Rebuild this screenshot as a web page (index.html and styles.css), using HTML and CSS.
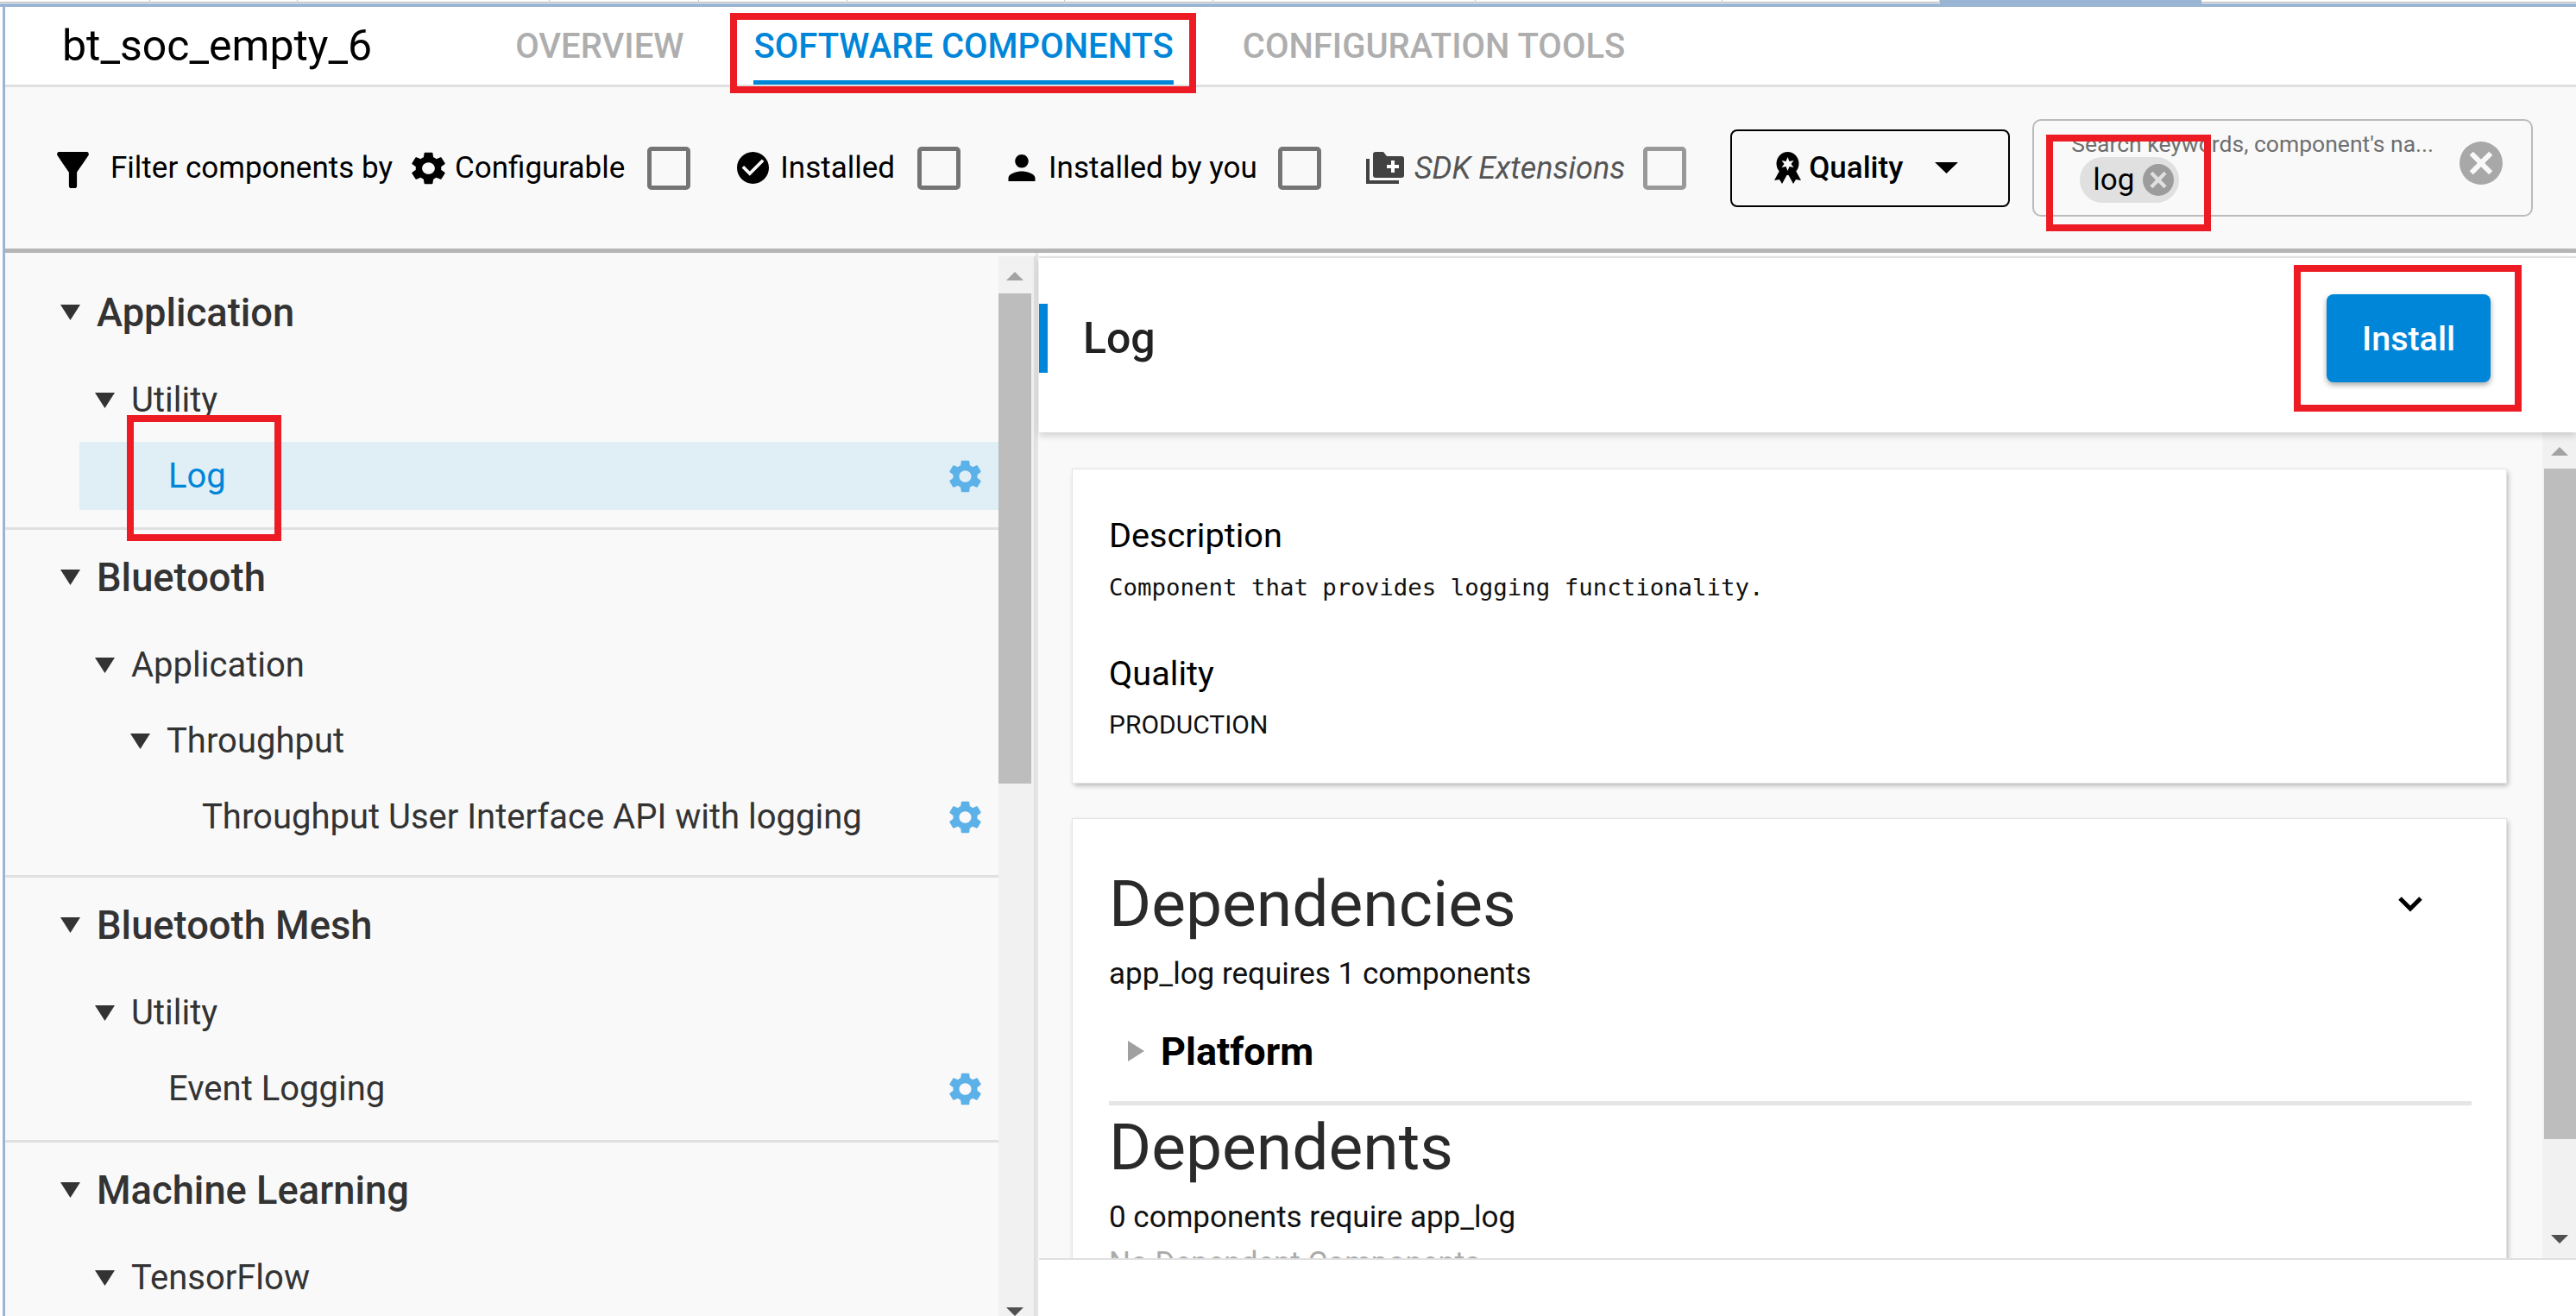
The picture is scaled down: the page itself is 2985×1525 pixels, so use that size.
FILE: index.html
```html
<!DOCTYPE html>
<html lang="en">
<head>
<meta charset="utf-8">
<title>bt_soc_empty_6</title>
<link rel="stylesheet" href="styles.css">
</head>
<body>
<svg class="defs" width="0" height="0">
  <symbol id="gear" viewBox="2.5 2 19 20" preserveAspectRatio="none"><path d="M19.14 12.94c.04-.3.06-.61.06-.94 0-.32-.02-.64-.07-.94l2.03-1.58c.18-.14.23-.41.12-.61l-1.92-3.32c-.12-.22-.37-.29-.59-.22l-2.39.96c-.5-.38-1.03-.7-1.62-.94l-.36-2.54c-.04-.24-.24-.41-.48-.41h-3.84c-.24 0-.43.17-.47.41l-.36 2.54c-.59.24-1.13.57-1.62.94l-2.39-.96c-.22-.08-.47 0-.59.22L2.74 8.87c-.12.21-.08.47.12.61l2.03 1.58c-.05.3-.09.63-.09.94s.02.64.07.94l-2.03 1.58c-.18.14-.23.41-.12.61l1.92 3.32c.12.22.37.29.59.22l2.39-.96c.5.38 1.03.7 1.62.94l.36 2.54c.05.24.24.41.48.41h3.84c.24 0 .44-.17.47-.41l.36-2.54c.59-.24 1.13-.56 1.62-.94l2.39.96c.22.08.47 0 .59-.22l1.92-3.32c.12-.22.07-.47-.12-.61l-2.01-1.58zM12 15.6c-1.98 0-3.6-1.62-3.6-3.6s1.62-3.6 3.6-3.6 3.6 1.62 3.6 3.6-1.62 3.6-3.6 3.6z"/></symbol>
  <symbol id="tri" viewBox="0 0 10 10" preserveAspectRatio="none"><path d="M0 0H10L5 10Z"/></symbol>
  <symbol id="clear" viewBox="0 0 24 24" preserveAspectRatio="none"><path fill-rule="evenodd" d="M12 0a12 12 0 1 0 0 24a12 12 0 1 0 0-24zM7.6 5.6L12 10l4.4-4.4l2 2L14 12l4.4 4.4l-2 2L12 14l-4.4 4.4l-2-2L10 12L5.600 7.600z"/></symbol>
</svg>

<div class="strip">
  <span class="strip-tab"></span><span class="strip-tab"></span><span class="strip-tab"></span><span class="strip-tab"></span><span class="strip-tab"></span><span class="strip-tab"></span><span class="strip-tab"></span><span class="strip-tab"></span><span class="strip-tab"></span><span class="strip-tab"></span><span class="strip-tab strip-active"></span><span class="strip-rest"></span>
</div>

<div class="app">
  <header class="header">
    <h1 class="title">bt_soc_empty_6</h1>
    <nav class="tabs">
      <a class="tab tab-overview">OVERVIEW</a>
      <a class="tab tab-active">SOFTWARE COMPONENTS</a>
      <a class="tab tab-tools">CONFIGURATION TOOLS</a>
    </nav>
  </header>

  <section class="filters">
    <svg class="ico-funnel" viewBox="4 4 16 16" preserveAspectRatio="none"><path d="M4.25 5.61C6.27 8.2 10 13 10 13v6c0 .55.45 1 1 1h2c.55 0 1-.45 1-1v-6s3.72-4.8 5.74-7.39c.51-.66.04-1.61-.79-1.61H5.04c-.83 0-1.3.95-.79 1.61z"/></svg>
    <span class="flabel flabel-by">Filter components by</span>
    <svg class="ico-fgear"><use href="#gear"/></svg>
    <span class="flabel flabel-conf">Configurable</span>
    <span class="check check-conf"></span>
    <svg class="ico-check" viewBox="2 2 20 20"><path d="M12 2C6.48 2 2 6.48 2 12s4.48 10 10 10 10-4.48 10-10S17.52 2 12 2zm-2 15l-5-5 1.41-1.41L10 14.17l7.59-7.59L19 8l-9 9z"/></svg>
    <span class="flabel flabel-inst">Installed</span>
    <span class="check check-inst"></span>
    <svg class="ico-person" viewBox="4 4 16 16"><path d="M12 12c2.210 0 4-1.790 4-4s-1.790-4-4-4-4 1.790-4 4 1.790 4 4 4zm0 2c-2.670 0-8 1.340-8 4v2h16v-2c0-2.660-5.330-4-8-4z"/></svg>
    <span class="flabel flabel-you">Installed by you</span>
    <span class="check check-you"></span>
    <svg class="ico-sdk" viewBox="0 0 44 37"><path class="sdk-back" d="M2 8V35H38" /><path d="M8 3a3 3 0 0 1 3-3h9l4 5h17a3 3 0 0 1 3 3v19a3 3 0 0 1-3 3H11a3 3 0 0 1-3-3z"/><path class="sdk-plus" d="M31 10v14M24 17h14"/></svg>
    <span class="flabel flabel-sdk">SDK Extensions</span>
    <span class="check check-sdk"></span>
    <button class="quality">
      <svg class="ico-medal" viewBox="0 0 31 37"><path d="M6 22L0 33l6-1l3 5l6-11zM25 22l6 11l-6-1l-3 5l-6-11z"/><path fill-rule="evenodd" d="M15.500 0a13 13.500 0 1 0 0 27a13 13.500 0 1 0 0-27zM15.500 6l2 5l5-1l-3 4l3 4l-5-1l-2 5l-2-5l-5 1l3-4l-3-4l5 1z"/></svg>
      <span class="quality-label">Quality</span>
      <svg class="ico-qtri"><use href="#tri"/></svg>
    </button>
    <div class="search">
      <div class="search-main">
        <div class="search-ph">Search keywords, component's na...</div>
        <div class="chip"><span class="chip-text">log</span><svg class="chip-x"><use href="#clear"/></svg></div>
      </div>
      <svg class="search-clear"><use href="#clear"/></svg>
    </div>
  </section>

  <main class="main">
    <aside class="left">
      <div class="tree">
        <div class="group group-first">
          <div class="head"><svg class="tri"><use href="#tri"/></svg>Application</div>
          <div class="rows">
            <div class="row lvl1"><svg class="tri"><use href="#tri"/></svg>Utility</div>
            <div class="row lvl2 row-sel">Log<svg class="row-gear"><use href="#gear"/></svg></div>
          </div>
        </div>
        <div class="group">
          <div class="head"><svg class="tri"><use href="#tri"/></svg>Bluetooth</div>
          <div class="rows rows-long">
            <div class="row lvl1"><svg class="tri"><use href="#tri"/></svg>Application</div>
            <div class="row lvl2b"><svg class="tri"><use href="#tri"/></svg>Throughput</div>
            <div class="row lvl3">Throughput User Interface API with logging<svg class="row-gear"><use href="#gear"/></svg></div>
          </div>
        </div>
        <div class="group">
          <div class="head"><svg class="tri"><use href="#tri"/></svg>Bluetooth Mesh</div>
          <div class="rows">
            <div class="row lvl1"><svg class="tri"><use href="#tri"/></svg>Utility</div>
            <div class="row lvl2">Event Logging<svg class="row-gear"><use href="#gear"/></svg></div>
          </div>
        </div>
        <div class="group group-last">
          <div class="head"><svg class="tri"><use href="#tri"/></svg>Machine Learning</div>
          <div class="rows">
            <div class="row lvl1"><svg class="tri"><use href="#tri"/></svg>TensorFlow</div>
          </div>
        </div>
      </div>
      <div class="sbar sbar-left">
        <span class="sb-up"></span>
        <span class="sb-thumb"></span>
        <span class="sb-down"></span>
      </div>
    </aside>

    <section class="right">
      <div class="detail-head">
        <span class="accent"></span>
        <h2 class="detail-title">Log</h2>
        <button class="install">Install</button>
      </div>
      <div class="detail-body">
        <div class="cards">
          <article class="card card-info">
            <h3 class="lbl">Description</h3>
            <p class="mono">Component that provides logging functionality.</p>
            <h3 class="lbl lbl-q">Quality</h3>
            <p class="val">PRODUCTION</p>
          </article>
          <article class="card card-deps">
            <div class="deps-top">
              <h2 class="big">Dependencies</h2>
              <svg class="chev" viewBox="0 0 30 19"><path d="M3 3L15 15L27 3"/></svg>
            </div>
            <p class="sub">app_log requires 1 components</p>
            <div class="platform"><span class="ptri"></span>Platform</div>
            <hr class="rule">
            <h2 class="big big-2">Dependents</h2>
            <p class="sub">0 components require app_log</p>
            <p class="none">No Dependent Components</p>
          </article>
        </div>
        <div class="sbar sbar-right">
          <span class="sb-up"></span>
          <span class="sb-thumb"></span>
          <span class="sb-down"></span>
        </div>
      </div>
      <div class="detail-foot"></div>
    </section>
  </main>
</div>

<div class="mark mark-tab"></div>
<div class="mark mark-chip"></div>
<div class="mark mark-log"></div>
<div class="mark mark-install"></div>
</body>
</html>
```

FILE: styles.css
```css
* { box-sizing: border-box; }
html, body { margin: 0; padding: 0; }
body {
  width: 2985px;
  height: 1525px;
  overflow: hidden;
  position: relative;
  background: #fff;
  font-family: Roboto, "Liberation Sans", sans-serif;
  color: #000;
}
h1, h2, h3, p { margin: 0; font-weight: 400; }
svg { display: block; fill: currentColor; flex: none; }
.defs { position: absolute; }

/* window strip */
.strip {
  height: 8px;
  display: grid;
  grid-template-columns: 174px 171px 292px 173px 172px 252px 172px 304px 286px 252px 303px 1fr;
  background: linear-gradient(#fff 0 2px, #aaa 2px 3px, #fff 3px 4px, #9ab5d3 4px);
}
.strip-tab { border-right: 1px solid #c8c8c8; height: 3px; }
.strip-active { height: 8px; background: #9ab5d3; border: 0; }

.app {
  height: 1517px;
  margin-left: 3px;
  border-left: 3px solid #9ab5d3;
  display: flex;
  flex-direction: column;
}

/* header */
.header {
  height: 93px;
  flex: none;
  border-bottom: 3px solid #e0e0e0;
  display: flex;
  background: #fff;
}
.title {
  font-size: 50px;
  line-height: 90px;
  margin-left: 66px;
  color: #000;
}
.tabs { display: flex; }
.tab {
  display: block;
  height: 90px;
  font-size: 40px;
  line-height: 91px;
  font-weight: 500;
  color: #aeaeae;
}
.tab-overview { margin-left: 166px; }
.tab-active {
  margin-left: 81px;
  color: #0086d9;
  border-bottom: 5px solid #0086d9;
}
.tab-tools { margin-left: 80px; }

/* filter bar */
.filters {
  height: 192px;
  flex: none;
  border-bottom: 5px solid #b5b5b5;
  background: #f9f9f9;
  display: flex;
  align-items: center;
  padding-left: 60px;
}
.flabel { font-size: 35px; line-height: 50px; white-space: nowrap; }
.ico-funnel { width: 37px; height: 42px; margin-top: 4px; }
.flabel-by { margin-left: 25px; }
.ico-fgear { width: 39px; height: 38px; margin-left: 22px; }
.flabel-conf { margin-left: 11px; }
.check { width: 50px; height: 50px; border: 5px solid #757575; border-radius: 5px; }
.check-conf { margin-left: 26px; }
.ico-check { width: 37px; height: 37px; margin-left: 54px; }
.flabel-inst { margin-left: 13px; }
.check-inst { margin-left: 26px; }
.ico-person { width: 32px; height: 31px; margin-left: 55px; }
.flabel-you { margin-left: 15px; }
.check-you { margin-left: 24px; }
.ico-sdk { width: 44px; height: 37px; margin-left: 52px; color: #424242; }
.sdk-back { fill: none; stroke: #424242; stroke-width: 4; }
.sdk-plus { fill: none; stroke: #fff; stroke-width: 4; }
.flabel-sdk { margin-left: 12px; font-size: 36px; font-style: italic; color: #555; }
.check-sdk { margin-left: 21px; border-color: #999; }
.quality {
  width: 324px;
  height: 90px;
  margin-left: 51px;
  border: 2px solid #000;
  border-radius: 8px;
  background: #f9f9f9;
  display: flex;
  align-items: center;
  padding: 0 0 0 49px;
  font-family: inherit;
  color: #000;
}
.ico-medal { width: 31px; height: 37px; }
.quality-label { font-size: 35px; font-weight: 500; margin-left: 9px; }
.ico-qtri { width: 27px; height: 13px; margin-left: 37px; }
.search {
  width: 580px;
  height: 113px;
  margin-left: 26px;
  border: 2px solid #bbb;
  border-radius: 10px;
  display: flex;
  align-items: center;
}
.search-main { flex: 1; padding-left: 43px; padding-bottom: 2px; min-width: 0; }
.search-ph { font-size: 26.500px; line-height: 30px; color: #6f6f6f; white-space: nowrap; }
.chip {
  width: 115px;
  height: 53px;
  margin: 0 0 0 10px;
  border-radius: 27px;
  background: #e0e0e0;
  display: flex;
  align-items: center;
  padding-left: 15px;
}
.chip-text { font-size: 35px; line-height: 53px; }
.chip-x { width: 36px; height: 37px; margin-left: 10px; color: #9c9c9c; }
.search-clear { width: 50px; height: 50px; margin: 0 33px 12px 0; color: #a8a8a8; }

/* main */
.main { flex: 1; min-height: 0; display: flex; }
.left { width: 1194px; flex: none; display: flex; background: #f9f9f9; overflow: hidden; }
.tree { width: 1151px; flex: none; }
.group { border-bottom: 3px solid #e0e0e0; padding-bottom: 20px; color: #333; }
.group-first { padding-top: 14px; }
.group-last { border: 0; }
.head {
  height: 110px;
  display: flex;
  align-items: center;
  font-size: 45.300px;
  font-weight: 500;
  padding-left: 64px;
  color: #333;
}
.tri { width: 23px; height: 18px; margin-right: 19px; color: #333; }
.rows { display: flex; flex-direction: column; gap: 9px; padding-top: 7px; }
.rows-long { padding-bottom: 8px; }
.row {
  height: 79px;
  display: flex;
  align-items: center;
  font-size: 40px;
  color: #333;
}
.lvl1 { padding-left: 104px; }
.lvl2b { padding-left: 145px; }
.lvl2 { padding-left: 189px; }
.lvl3 { padding-left: 228px; }
.row-sel {
  margin-left: 86px;
  padding-left: 103px;
  background: #e0eff6;
  color: #0086d9;
}
.row-gear { width: 37px; height: 38px; margin-left: auto; margin-right: 20px; color: #5cb1e8; }

/* scrollbars */
.sbar { display: flex; flex-direction: column; align-items: center; background: #f1f1f1; }
.sbar-left { width: 43px; flex: none; margin-top: 4px; padding-right: 3px; border-right: 2px solid #e0e0e0; }
.sb-up, .sb-down { flex: none; width: 0; height: 0; border-left: 10px solid transparent; border-right: 10px solid transparent; }
.sb-up { border-bottom: 10px solid #a3a3a3; }
.sb-down { border-top: 10px solid #505050; margin-top: auto; }
.sbar-left .sb-up { margin-top: 18px; }
.sb-thumb { flex: none; background: #bdbdbd; }
.sbar-left .sb-thumb { width: 38px; height: 568px; margin-top: 15px; }
.sbar-left .sb-down { margin-bottom: 0; }

/* right */
.right {
  flex: 1;
  min-width: 0;
  display: flex;
  flex-direction: column;
  border-left: 3px solid #e4e4e4;
  padding-top: 4px;
}
.detail-head {
  height: 204px;
  flex: none;
  border-top: 2px solid #e0e0e0;
  background: #fff;
  display: flex;
  align-items: center;
  padding-bottom: 16px;
  box-shadow: 0 4px 8px rgba(0,0,0,.16);
  position: relative;
  z-index: 1;
  margin-left: 1px;
}
.accent { width: 10px; height: 80px; background: #0086d9; }
.detail-title { font-size: 50px; font-weight: 500; margin-left: 41px; color: #212121; }
.install {
  width: 190px;
  height: 102px;
  margin-left: auto;
  margin-right: 99px;
  border: 0;
  border-radius: 8px;
  background: #0086d9;
  color: #fff;
  font-family: inherit;
  font-size: 39.500px;
  font-weight: 500;
  box-shadow: 0 3px 6px rgba(0,0,0,.35);
}
.detail-body { flex: 1; min-height: 0; display: flex; background: #f9f9f9; overflow: hidden; }
.cards { width: 1743px; flex: none; padding: 43px 42px 0 40px; }
.card { background: #fff; box-shadow: 0 0 0 1px #e4e4e4, 2px 3px 6px rgba(0,0,0,.3); }
.card-info { height: 363px; padding: 52px 42px 0; }
.lbl { font-size: 39.700px; line-height: 50px; color: #000; }
.lbl-q { margin-top: 56px; }
.mono { font-family: "DejaVu Sans Mono", monospace; font-size: 27.400px; line-height: 40px; margin-top: 15px; margin-bottom: -1px; color: #111; }
.val { font-size: 30px; line-height: 40px; margin-top: 14px; color: #111; }
.card-deps { margin-top: 42px; height: 700px; padding: 53px 40px 0 42px; }
.deps-top { display: flex; align-items: center; justify-content: space-between; }
.big { font-size: 75px; line-height: 90px; font-weight: 400; color: #2a2a2a; }
.chev { width: 30px; height: 19px; margin-right: 56px; fill: none; stroke: #000; stroke-width: 5; }
.sub { font-size: 35px; line-height: 44px; margin-top: 15px; color: #111; }
.platform {
  display: flex;
  align-items: center;
  height: 50px;
  margin-top: 42px;
  font-size: 45px;
  font-weight: 700;
  color: #000;
}
.ptri {
  width: 0;
  height: 0;
  margin: 0 19px 0 22px;
  border-left: 19px solid #a0a0a0;
  border-top: 12px solid transparent;
  border-bottom: 12px solid transparent;
}
.rule { height: 5px; border: 0; margin: 33px 0 0; background: #e5e5e5; }
.big-2 { margin-top: 3px; }
.none { font-size: 35px; line-height: 44px; margin-top: 9px; color: #aaa; }
.sbar-right { width: 39px; flex: none; margin-left: auto; }
.sbar-right .sb-up { margin-top: 17px; }
.sbar-right .sb-thumb { width: 37px; height: 777px; margin-top: 15px; margin-left: 2px; }
.sbar-right .sb-down { margin-bottom: 17px; }
.detail-foot { height: 67px; flex: none; border-top: 2px solid #e0e0e0; background: #fff; margin-left: 1px; position: relative; z-index: 1; }

/* red annotation boxes drawn over the screenshot */
.mark { position: absolute; border: 8px solid #ed1c24; z-index: 5; }
.mark-tab { left: 846px; top: 15px; width: 540px; height: 93px; }
.mark-chip { left: 2371px; top: 156px; width: 191px; height: 112px; }
.mark-log { left: 147px; top: 481px; width: 179px; height: 146px; }
.mark-install { left: 2658px; top: 307px; width: 264px; height: 170px; }
```
